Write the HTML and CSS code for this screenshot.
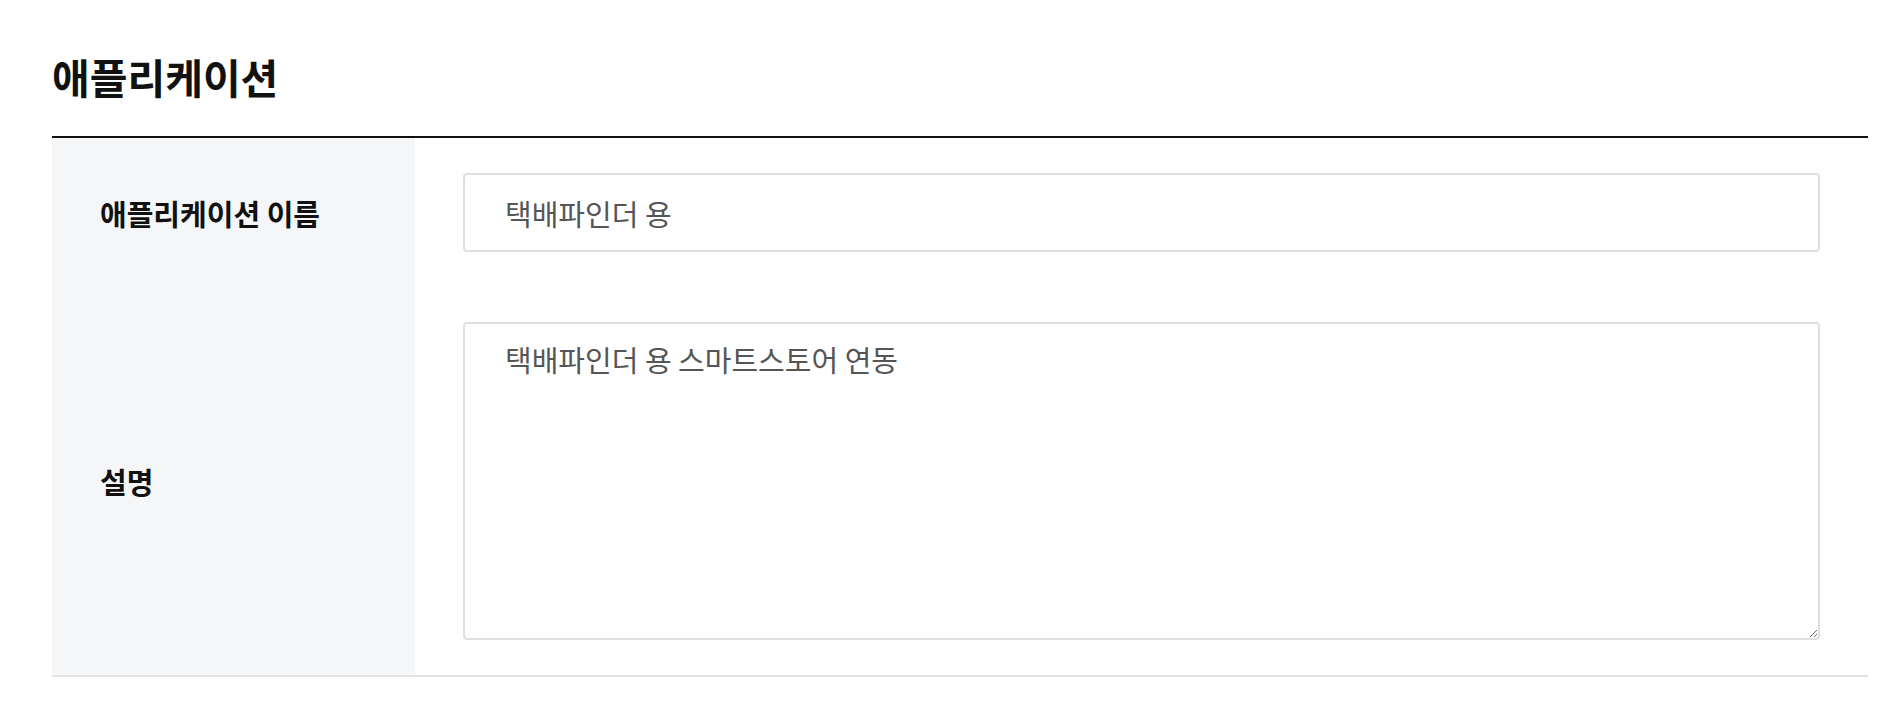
FILE: index.html
```html
<!DOCTYPE html>
<html>
<head>
    <meta charset="utf-8">
    <title>애플리케이션</title>
    <link rel="stylesheet" href="styles.css">
</head>
<body>
    <div class="page">
        <h2 class="section-title">애플리케이션</h2>

        <div class="form-table">
            <div class="form-label">애플리케이션 이름</div>
            <div class="form-field">
                <input class="text-input" type="text" value="택배파인더 용">
            </div>

            <div class="form-label">설명</div>
            <div class="form-field">
                <textarea class="text-area">택배파인더 용 스마트스토어 연동</textarea>
            </div>
        </div>
    </div>
</body>
</html>
```

FILE: styles.css
```css
body {
    margin: 0;
    font-family: "Noto Sans CJK KR", "Noto Sans", sans-serif;
    color: #111;
    background: #fff;
}
.page {
    padding: 0 16px 0 52px;
}
.section-title {
    font-size: 41px;
    font-weight: 700;
    line-height: 53px;
    margin: 50px 0 33px;
}
.form-table {
    display: grid;
    grid-template-columns: 363px 1fr;
    border-top: 2px solid #111;
    border-bottom: 2px solid #e1e2e6;
}
.form-label {
    display: flex;
    align-items: center;
    padding-left: 48px;
    background: #f5f6f8;
    font-size: 29px;
    font-weight: 700;
}
.form-field {
    padding: 35px 48px;
}
.text-input,
.text-area {
    display: block;
    box-sizing: border-box;
    width: 100%;
    margin: 0;
    border: 2px solid #dfdfe3;
    border-radius: 4px;
    font-family: inherit;
    font-size: 29px;
    color: #555;
    background: #fff;
    outline: none;
}
.text-input {
    height: 79px;
    padding: 0 40px;
}
.text-area {
    height: 318px;
    padding: 14px 40px;
    line-height: 1.5;
    resize: vertical;
}
```
